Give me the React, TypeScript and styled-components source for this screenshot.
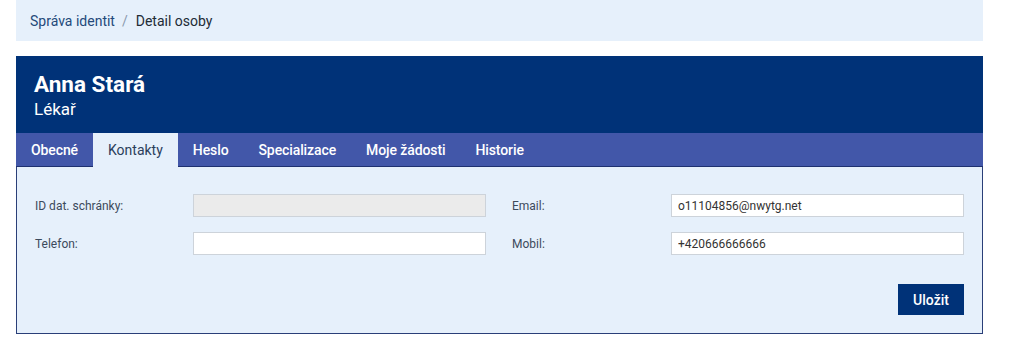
import React, { useState } from 'react'
import styled, { createGlobalStyle } from 'styled-components'

const GlobalStyle = createGlobalStyle`
  body {
    margin: 0;
    background: #ffffff;
    font-family: Roboto, "Liberation Sans", Arial, sans-serif;
  }
`

const Page = styled.div`
  width: 967px;
  margin-left: 16px;
`

const Breadcrumb = styled.nav`
  height: 41px;
  background: #e6f0fb;
  display: flex;
  align-items: center;
  padding: 0 14px;
  font-size: 14px;
  margin-bottom: 15px;
`

const Crumb = styled.a`
  color: #24497a;
  text-decoration: none;
`

const Divider = styled.span`
  color: #8a99ad;
  margin: 0 8px 0 7px;
`

const Current = styled.span`
  color: #222b36;
`

const Card = styled.section`
  display: flex;
  flex-direction: column;
`

const Header = styled.header`
  background: #003278;
  color: #ffffff;
  height: 77px;
  padding: 14px 18px 0;
  box-sizing: border-box;
`

const Name = styled.h1`
  margin: 0;
  font-size: 22.5px;
  font-weight: 700;
  line-height: 28px;
`

const Role = styled.div`
  font-size: 17px;
  line-height: 22px;
`

const Tabs = styled.div`
  display: flex;
  background: #4257a9;
  height: 34px;
  border-bottom: 1px solid #1e3170;
  box-sizing: border-box;
`

const Tab = styled.button<{ $active?: boolean }>`
  border: 0;
  margin: 0;
  padding: 0 15px;
  font-family: inherit;
  font-size: 14px;
  font-weight: ${(p) => (p.$active ? 400 : 500)};
  letter-spacing: ${(p) => (p.$active ? '0' : '-0.1px')};
  color: ${(p) => (p.$active ? '#2c3e5c' : '#ffffff')};
  background: ${(p) => (p.$active ? '#e6f0fb' : 'transparent')};
  height: ${(p) => (p.$active ? '34px' : '33px')};
  cursor: pointer;
`

const Body = styled.div`
  background: #e6f0fb;
  border: 1px solid #2a3f78;
  border-top: 0;
  padding: 27px 18px 18px;
  height: 167px;
  box-sizing: border-box;
`

const Grid = styled.div`
  display: grid;
  grid-template-columns: 158px 293px 26px 159px 293px;
  row-gap: 15px;
  align-items: center;
`

const Label = styled.label`
  font-size: 12px;
  color: #3c4a5c;
`

const Input = styled.input<{ $disabled?: boolean }>`
  height: 23px;
  box-sizing: border-box;
  border: 1px solid #cdd3da;
  background: ${(p) => (p.$disabled ? '#ebebeb' : '#ffffff')};
  padding: 0 6px;
  font-family: inherit;
  font-size: 12px;
  color: #333;
  outline: none;
`

const Actions = styled.div`
  display: flex;
  justify-content: flex-end;
  margin-top: 29px;
`

const SaveButton = styled.button`
  background: #003278;
  color: #ffffff;
  border: 0;
  height: 31px;
  width: 66px;
  font-family: inherit;
  font-size: 14px;
  font-weight: 500;
  cursor: pointer;
`

const tabs = ['Obecné', 'Kontakty', 'Heslo', 'Specializace', 'Moje žádosti', 'Historie']

const App = () => {
  const [active, setActive] = useState(1)

  return (
    <Page>
      <GlobalStyle />
      <Breadcrumb>
        <Crumb href="#">Správa identit</Crumb>
        <Divider>/</Divider>
        <Current>Detail osoby</Current>
      </Breadcrumb>
      <Card>
        <Header>
          <Name>Anna Stará</Name>
          <Role>Lékař</Role>
        </Header>
        <Tabs>
          {tabs.map((t, i) => (
            <Tab key={t} $active={i === active} onClick={() => setActive(i)}>
              {t}
            </Tab>
          ))}
        </Tabs>
        <Body>
          <Grid>
            <Label>ID dat. schránky:</Label>
            <Input $disabled readOnly />
            <span />
            <Label>Email:</Label>
            <Input defaultValue="o11104856@nwytg.net" />
            <Label>Telefon:</Label>
            <Input />
            <span />
            <Label>Mobil:</Label>
            <Input defaultValue="+420666666666" />
          </Grid>
          <Actions>
            <SaveButton>Uložit</SaveButton>
          </Actions>
        </Body>
      </Card>
    </Page>
  )
}

export default App
